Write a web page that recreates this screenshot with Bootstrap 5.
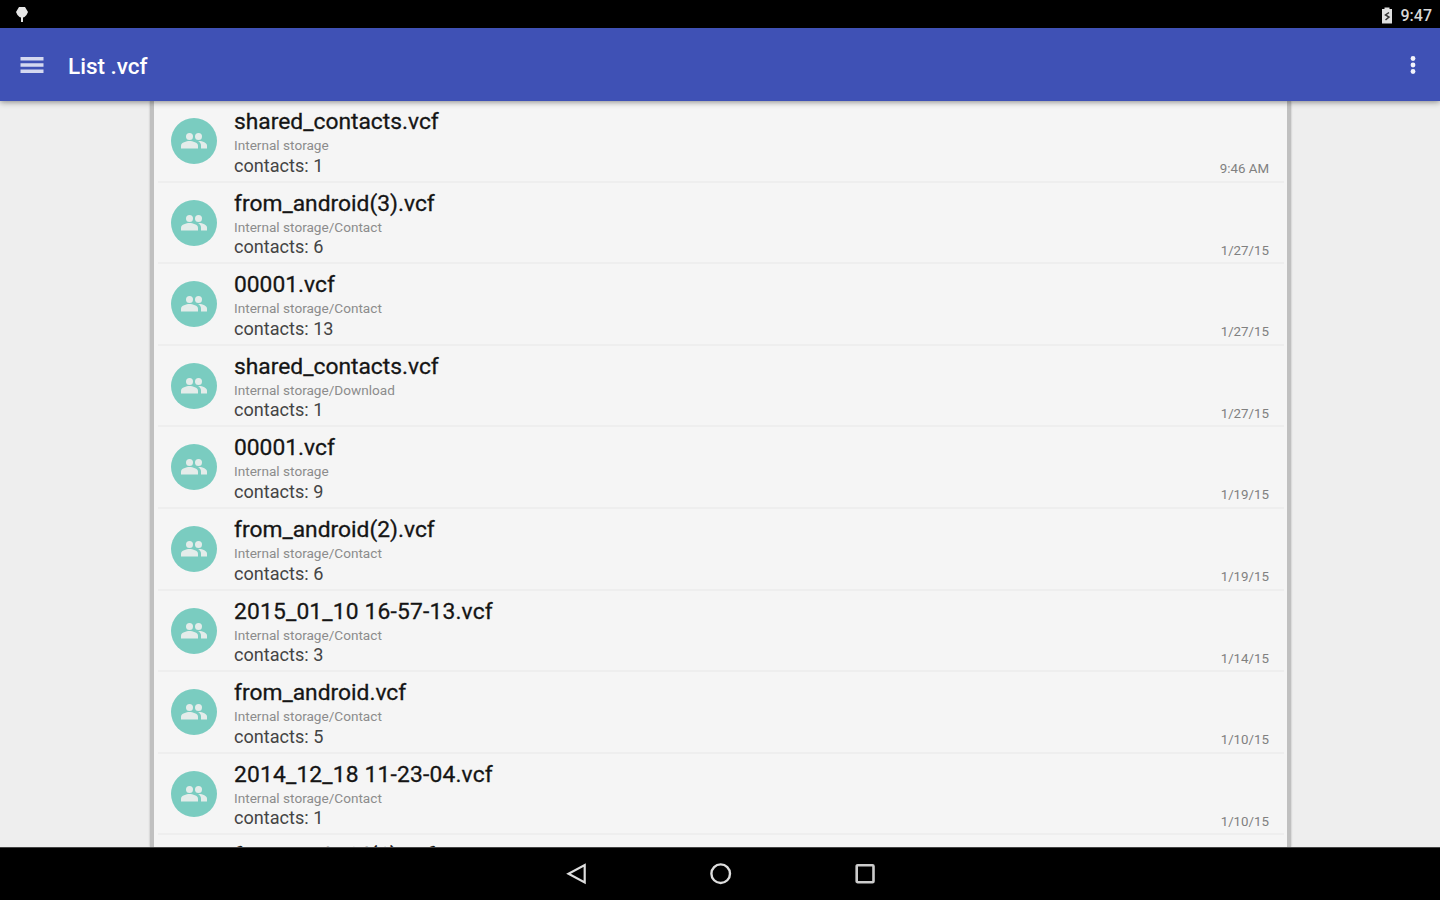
<!DOCTYPE html>
<html lang="en">
<head>
    <meta charset="UTF-8">
    <meta name="viewport" content="width=device-width, initial-scale=1.0">
    <title>List .vcf</title>
    <link href="https://cdn.jsdelivr.net/npm/bootstrap@5.3.0/dist/css/bootstrap.min.css" rel="stylesheet">
    <style>
        body { font-family: Roboto, sans-serif; background: #eee; color: #151515; }
        svg { display: block; flex: none; }
        .status-bar { height: 28px; padding: 2px 8px 0 13px; color: #d8d8d8; font-size: 16px; font-weight: 500; }
        #clock { padding-top: 2px; }
        .app-bar { height: 73px; background: #3f51b5; padding: 0 17px 0 20px; box-shadow: 0 1px 6px rgba(0, 0, 0, .45); z-index: 2; }
        .app-title { font-size: 22.5px; font-weight: 500; margin-left: 24px; line-height: 28px; padding-top: 2px; }
        .file-panel { width: 1141px; margin-left: 150px; background: #f5f5f5; border: solid #c0c0c0; border-width: 0 4px; box-shadow: 0 0 2px rgba(0, 0, 0, .25); }
        .file-row { height: 81.6px; margin-left: 4px; margin-right: 3px; padding: 0 15px 0 13px; border-bottom: 2px solid #eee; }
        .avatar { width: 46px; height: 46px; margin-top: 17px; background: #7accc0; }
        .file-text { margin-left: 17px; padding-top: 8px; }
        .file-name { font-size: 22.8px; line-height: 26px; -webkit-text-stroke: .3px; }
        .file-name.dated { letter-spacing: .17px; }
        .file-path { font-size: 13.6px; line-height: 18px; margin-top: 1px; color: #8c8c8c; }
        .file-count { font-size: 18.1px; line-height: 22px; margin-top: .7px; color: #444; }
        .file-date { font-size: 13.3px; line-height: 16px; margin-bottom: 3.6px; color: #808080; }
        .nav-keys { height: 53px; gap: 120px; z-index: 2; border-top: 1px solid #444; padding-left: 1px; }
    </style>
</head>
<body class="vh-100 d-flex flex-column overflow-hidden">
    <div class="status-bar bg-black d-flex align-items-center justify-content-between flex-shrink-0">
        <svg width="18" height="18" viewBox="0 0 18 18" fill="#e6e6e6"><path d="M6 1h6l1.500 2.500 1.500 2.500-1.500 3-2 2-1.500.500v4.500H8v-4.500L6.500 11l-2-2L3 6l1.500-2.500z"/></svg>
        <div class="d-flex align-items-center">
            <svg width="12" height="17" viewBox="0 0 12 17" class="me-2"><path d="M3.500.500h5V2H11v14.500H1V2h2.500z" fill="#e0e0e0"/><path d="M8 5.500 4.500 8l3.500 2-3.500 3" fill="none" stroke="#333" stroke-width="1.500"/></svg>
            <span id="clock">9:47</span>
        </div>
    </div>

    <nav class="app-bar d-flex align-items-center text-white position-relative flex-shrink-0">
        <svg width="24" height="18" viewBox="0 0 24 18" fill="#d5d9f0"><path d="M.500 1h23v3.500H.500zM.500 7.200h23v3.500H.500zM.500 13.400h23v3.500H.500z"/></svg>
        <span class="app-title">List .vcf</span>
        <svg class="ms-auto" width="20" height="22" viewBox="0 0 20 22" fill="#f2f3fb"><circle cx="10" cy="4.500" r="2.400"/><circle cx="10" cy="11" r="2.400"/><circle cx="10" cy="17.500" r="2.400"/></svg>
    </nav>

    <main class="file-panel flex-grow-1 overflow-hidden">
        <div id="fileList"></div>
    </main>

    <footer class="nav-keys bg-black d-flex justify-content-center align-items-center position-relative flex-shrink-0">
        <svg width="24" height="24" viewBox="0 0 24 24" fill="none" stroke="#ddd" stroke-width="2.200"><path d="M19.700 3v17.500L3.500 11.700z"/></svg>
        <svg width="24" height="24" viewBox="0 0 24 24" fill="none" stroke="#ddd" stroke-width="2.400"><circle cx="11.700" cy="11.700" r="9.300"/></svg>
        <svg width="24" height="24" viewBox="0 0 24 24" fill="none" stroke="#ccc" stroke-width="2.600"><rect x="3.700" y="3.200" width="16.800" height="17" rx="1"/></svg>
    </footer>

    <script src="https://cdn.jsdelivr.net/npm/bootstrap@5.3.0/dist/js/bootstrap.bundle.min.js"></script>
    <script>
        const files = [
            ["shared_contacts.vcf", "Internal storage", 1, "9:46 AM"],
            ["from_android(3).vcf", "Internal storage/Contact", 6, "1/27/15"],
            ["00001.vcf", "Internal storage/Contact", 13, "1/27/15"],
            ["shared_contacts.vcf", "Internal storage/Download", 1, "1/27/15"],
            ["00001.vcf", "Internal storage", 9, "1/19/15"],
            ["from_android(2).vcf", "Internal storage/Contact", 6, "1/19/15"],
            ["2015_01_10 16-57-13.vcf", "Internal storage/Contact", 3, "1/14/15"],
            ["from_android.vcf", "Internal storage/Contact", 5, "1/10/15"],
            ["2014_12_18 11-23-04.vcf", "Internal storage/Contact", 1, "1/10/15"],
            ["from_android(1).vcf"],
        ];

        const people = `<svg width="28" height="20" viewBox="0 0 28 20" fill="#e4ecea">
            <circle cx="9.500" cy="5.500" r="3.500"/><circle cx="18.500" cy="5.500" r="3.500"/>
            <path d="M1 17.500v-3c0-3 5.500-4.500 8.500-4.500s8.500 1.500 8.500 4.500v3z"/>
            <path d="M18 10c4-.300 9 1.500 9 4.500v3h-6v-3c0-2-1.200-3.500-3-4.500z"/></svg>`;

        document.getElementById("fileList").innerHTML = files.map(([name, path, count, date]) => `
            <div class="file-row d-flex">
                <div class="avatar rounded-circle d-flex align-items-center justify-content-center flex-shrink-0">${people}</div>
                <div class="file-text flex-grow-1">
                    <div class="file-name ${name.startsWith("20") ? "dated" : ""}">${name}</div>
                    ${path ? `<div class="file-path">${path}</div>
                    <div class="file-count">contacts: ${count}</div>` : ""}
                </div>
                ${date ? `<div class="file-date align-self-end">${date}</div>` : ""}
            </div>`).join("");
    </script>
</body>
</html>
